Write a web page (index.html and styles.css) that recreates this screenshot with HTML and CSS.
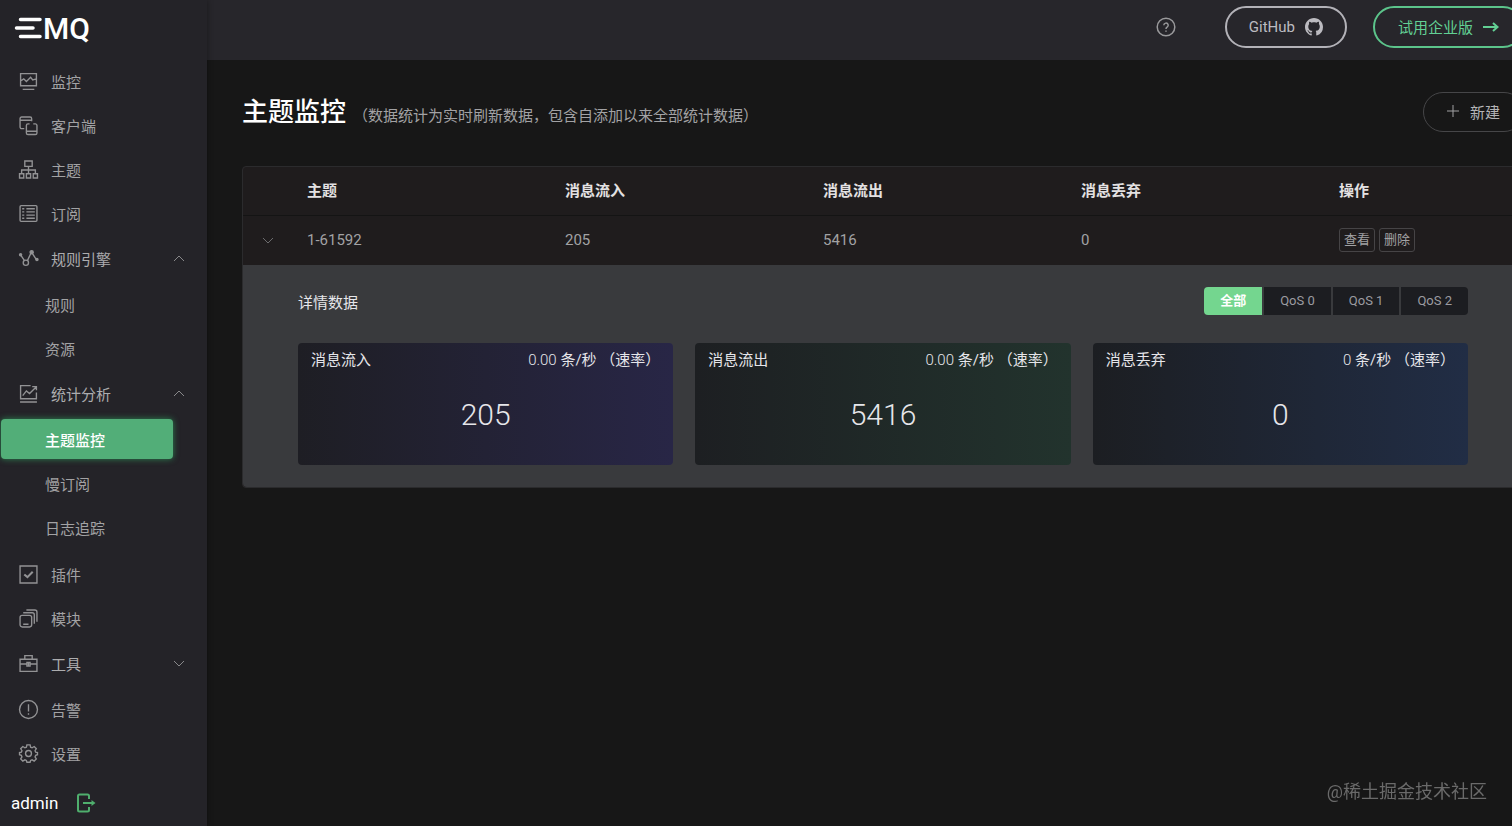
FILE: index.html
```html
<!DOCTYPE html>
<html lang="zh-CN">
<head>
    <meta charset="UTF-8">
    <meta name="viewport" content="width=device-width, initial-scale=1.0">
    <title>EMQ Dashboard</title>
    <link rel="stylesheet" href="styles.css">
</head>
<body>
    <div class="app">
        <aside class="sidebar">
            <a href="#" class="logo" aria-label="EMQ">
                <svg width="90" height="36" viewBox="0 0 90 36">
                    <path d="M6.500 9.500H26M2.500 18H19M6.500 26.500H26" fill="none" stroke="#fff" stroke-width="3.500" stroke-linecap="round"/>
                    <text x="29" y="29" class="logo-text">MQ</text>
                </svg>
            </a>

            <nav class="menu">
                <a href="#" class="menu-item">
                    <svg class="icon" viewBox="0 0 18 18"><path d="M1.500 1.500h15v11.500h-15zM3.500 16.500h11M1.500 8.500l3-2 2.500 2.500 4-4 2 2.500 3.500-1"/></svg>
                    监控
                </a>
                <a href="#" class="menu-item">
                    <svg class="icon" viewBox="0 0 18 18"><path d="M5 12H2.500A1.500 1.500 0 0 1 1 10.500V2.500A1.500 1.500 0 0 1 2.500 1h8A1.500 1.500 0 0 1 12 2.500V5M1 4h11M10 7.500H8.500A1.500 1.500 0 0 0 7 9v7a1.500 1.500 0 0 0 1.500 1.500h7A1.500 1.500 0 0 0 17 16V9a1.500 1.500 0 0 0-1.500-1.500H13.500M7 14.500h10"/></svg>
                    客户端
                </a>
                <a href="#" class="menu-item">
                    <svg class="icon" viewBox="0 0 18 18"><path d="M5.500 1h7v5h-7zM9 6v7M2.500 13V9.500h13V13M.5 13h4v4h-4zM7 13h4v4H7zM13.500 13h4v4h-4z"/></svg>
                    主题
                </a>
                <a href="#" class="menu-item">
                    <svg class="icon" viewBox="0 0 18 18"><rect x="1" y="1.500" width="16" height="15" rx="1"/><path d="M3 4.500h2M7 4.500h8M3 7.500h2M7 7.500h8M3 10.500h2M7 10.500h8M3 13.500h2M7 13.500h8"/></svg>
                    订阅
                </a>

                <button type="button" class="menu-item menu-title">
                    <svg class="icon" viewBox="0 0 18 18"><path d="M1.500 5.500l3.700 5.500M8 11l3.500-7.500M12.500 4l4 6"/><circle cx="6.500" cy="13" r="2.500"/><circle class="dot" cx="1.500" cy="5.500" r="1"/><circle class="dot" cx="12" cy="3" r="1.500"/><circle class="dot" cx="17" cy="10" r="1"/></svg>
                    规则引擎
                    <svg class="arrow" viewBox="0 0 12 12"><path d="M1 8l5-5 5 5"/></svg>
                </button>
                <div class="submenu">
                    <a href="#" class="menu-item">规则</a>
                    <a href="#" class="menu-item">资源</a>
                </div>

                <button type="button" class="menu-item menu-title">
                    <svg class="icon" viewBox="0 0 18 18"><path d="M11 1.500H1.500v12.500h15V8M1 17h16M3.500 11l3.500-4.500 3 2.500 6-6M12.500 2.500H16.500V6"/></svg>
                    统计分析
                    <svg class="arrow" viewBox="0 0 12 12"><path d="M1 8l5-5 5 5"/></svg>
                </button>
                <div class="submenu submenu-last">
                    <a href="#" class="menu-item active">主题监控</a>
                    <a href="#" class="menu-item">慢订阅</a>
                    <a href="#" class="menu-item">日志追踪</a>
                </div>

                <a href="#" class="menu-item">
                    <svg class="icon" viewBox="0 0 18 18"><path d="M1 1h16v16H1z"/><path class="thick" d="M5 9l3 2.500 5-5"/></svg>
                    插件
                </a>
                <a href="#" class="menu-item">
                    <svg class="icon" viewBox="0 0 18 18"><rect x="1" y="6" width="11" height="11" rx="2"/><path d="M4 14.500h5M4 3.500h8.500a2 2 0 0 1 2 2V14M7 1h8a2 2 0 0 1 2 2v9"/></svg>
                    模块
                </a>
                <button type="button" class="menu-item menu-title">
                    <svg class="icon" viewBox="0 0 18 18"><path d="M1 5h16v11.500H1zM5.500 5V1.500h7V5M1 9.500h6M11 9.500h6M7.500 8h3v3.500h-3zM9 8v3.500"/></svg>
                    工具
                    <svg class="arrow" viewBox="0 0 12 12"><path d="M1 3l5 5 5-5"/></svg>
                </button>
                <a href="#" class="menu-item">
                    <svg class="icon" viewBox="0 0 18 18"><circle cx="9" cy="9" r="8.500"/><path d="M9 4v7M9 12.500v1.500"/></svg>
                    告警
                </a>
                <a href="#" class="menu-item">
                    <svg class="icon" viewBox="0 0 18 18"><circle cx="9" cy="9" r="2.800"/><path d="M7.500.8h3l.5 2.200 1.400.6 2-1.200 2 2-1.200 2 .6 1.400 1.700.4v2l-1.700.6-.6 1.400 1.200 2-2 2-2-1.200-1.400.6-.5 1.700h-3L7 15.600 5.600 15l-2 1.200-2-2 1.200-2-.6-1.400L.5 10.200v-2l1.700-.4.6-1.400-1.200-2 2-2 2 1.200L7 3z"/></svg>
                    设置
                </a>
            </nav>

            <div class="user">
                <span>admin</span>
                <button type="button" class="logout" aria-label="退出">
                    <svg width="20" height="20" viewBox="0 0 20 20"><path d="M13 6V3a1.500 1.500 0 0 0-1.500-1.500h-8A1.500 1.500 0 0 0 2 3v14a1.500 1.500 0 0 0 1.500 1.500h8A1.500 1.500 0 0 0 13 17v-3M7 10h10"/><path class="tip" d="M15.500 7l4 3-4 3z"/></svg>
                </button>
            </div>
        </aside>

        <div class="main">
            <header class="topbar">
                <a href="#" class="help" aria-label="帮助">
                    <svg width="20" height="20" viewBox="0 0 20 20"><circle cx="10" cy="10" r="8.800"/><path d="M7.800 8.300a2.200 2.200 0 1 1 3.300 1.900c-.8.500-1.100.9-1.100 1.800M10 13.500v1.300"/></svg>
                </a>
                <a href="#" class="pill">
                    GitHub
                    <svg width="18" height="18" viewBox="0 0 16 16"><path fill="currentColor" d="M8 0C3.580 0 0 3.580 0 8c0 3.540 2.290 6.530 5.470 7.590.4.070.55-.17.55-.38 0-.19-.01-.82-.01-1.490-2.010.37-2.530-.49-2.690-.94-.09-.23-.48-.94-.82-1.130-.28-.15-.68-.52-.01-.53.63-.01 1.080.58 1.230.82.72 1.210 1.870.87 2.330.66.07-.52.28-.87.51-1.070-1.780-.2-3.640-.89-3.640-3.950 0-.87.31-1.590.82-2.150-.08-.2-.36-1.020.08-2.120 0 0 .67-.21 2.200.82.64-.18 1.320-.27 2-.27s1.360.09 2 .27c1.530-1.040 2.200-.82 2.200-.82.44 1.100.16 1.920.08 2.120.51.56.82 1.270.82 2.150 0 3.070-1.870 3.750-3.650 3.950.29.25.54.73.54 1.480 0 1.070-.01 1.930-.01 2.200 0 .21.15.46.55.38A8.010 8.010 0 0 0 16 8c0-4.420-3.580-8-8-8z"/></svg>
                </a>
                <a href="#" class="pill pill-green">
                    试用企业版
                    <svg width="16" height="16" viewBox="0 0 16 16"><path d="M0 8h14M10 4l4.500 4-4.500 4" fill="none" stroke="currentColor" stroke-width="2"/></svg>
                </a>
            </header>

            <main class="content">
                <div class="page-head">
                    <h1>主题监控</h1>
                    <span class="page-desc">（数据统计为实时刷新数据，包含自添加以来全部统计数据）</span>
                    <button type="button" class="btn-new">
                        <svg width="14" height="14" viewBox="0 0 14 14"><path d="M7 1v12M1 7h12"/></svg>
                        新建
                    </button>
                </div>

                <table class="topic-table">
                    <colgroup>
                        <col class="col-expand">
                        <col class="col-data">
                        <col class="col-data">
                        <col class="col-data">
                        <col class="col-data">
                        <col>
                    </colgroup>
                    <thead>
                        <tr>
                            <th></th>
                            <th>主题</th>
                            <th>消息流入</th>
                            <th>消息流出</th>
                            <th>消息丢弃</th>
                            <th>操作</th>
                        </tr>
                    </thead>
                    <tbody>
                        <tr>
                            <td class="cell-expand">
                                <button type="button" class="btn-expand" aria-label="展开">
                                    <svg class="arrow" viewBox="0 0 12 12"><path d="M1 3l5 5 5-5"/></svg>
                                </button>
                            </td>
                            <td>1-61592</td>
                            <td>205</td>
                            <td>5416</td>
                            <td>0</td>
                            <td>
                                <div class="actions">
                                    <button type="button" class="btn-mini">查看</button>
                                    <button type="button" class="btn-mini">删除</button>
                                </div>
                            </td>
                        </tr>
                        <tr>
                            <td colspan="6" class="detail">
                                <div class="detail-head">
                                    <span>详情数据</span>
                                    <div class="qos">
                                        <label><input type="radio" name="qos" checked><span>全部</span></label>
                                        <label><input type="radio" name="qos"><span>QoS 0</span></label>
                                        <label><input type="radio" name="qos"><span>QoS 1</span></label>
                                        <label><input type="radio" name="qos"><span>QoS 2</span></label>
                                    </div>
                                </div>
                                <div class="cards">
                                    <div class="card card-in">
                                        <div class="card-head"><span>消息流入</span><span><span class="rate">0.00</span> 条/秒 （速率）</span></div>
                                        <div class="card-num">205</div>
                                    </div>
                                    <div class="card card-out">
                                        <div class="card-head"><span>消息流出</span><span><span class="rate">0.00</span> 条/秒 （速率）</span></div>
                                        <div class="card-num">5416</div>
                                    </div>
                                    <div class="card card-drop">
                                        <div class="card-head"><span>消息丢弃</span><span><span class="rate">0</span> 条/秒 （速率）</span></div>
                                        <div class="card-num">0</div>
                                    </div>
                                </div>
                            </td>
                        </tr>
                    </tbody>
                </table>
            </main>
        </div>
    </div>

    <div class="watermark">@稀土掘金技术社区</div>
</body>
</html>
```
FILE: styles.css
```css
* {
    margin: 0;
    padding: 0;
    box-sizing: border-box;
}

body {
    font-family: Roboto, "Noto Sans CJK SC", sans-serif;
    font-size: 15px;
    color: #a2a2a4;
    background-color: #171717;
    height: 100vh;
    overflow: hidden;
}

a {
    color: inherit;
    text-decoration: none;
}

button {
    font: inherit;
    color: inherit;
    background: none;
    border: none;
    cursor: pointer;
}

svg {
    flex-shrink: 0;
}

/* the layout is a little wider than the window */
.app {
    display: flex;
    width: calc(100% + 48px);
    min-height: 100vh;
}

/* Sidebar */
.sidebar {
    width: 207px;
    flex-shrink: 0;
    display: flex;
    flex-direction: column;
    background-color: #242328;
    box-shadow: 0 0 6px rgba(0, 0, 0, 0.4);
    z-index: 1;
}

.logo {
    display: flex;
    align-items: center;
    height: 59px;
    padding: 0 14px 4px;
}

.logo-text {
    font-size: 30px;
    font-weight: 500;
    fill: #fff;
}

.menu-item {
    display: flex;
    align-items: center;
    gap: 13px;
    width: 100%;
    height: 44px;
    padding: 0 22px 0 19px;
}

.menu-title {
    height: 47px;
    color: #acacae;
}

.icon {
    width: 19px;
    height: 19px;
    fill: none;
    stroke: #929294;
    stroke-width: 1.3;
    overflow: visible;
}

.icon .dot {
    fill: #929294;
}

.icon .thick {
    stroke-width: 2;
}

.arrow {
    width: 12px;
    height: 12px;
    margin-left: auto;
    fill: none;
    stroke: #88888a;
}

.submenu .menu-item {
    padding-left: 45px;
}

.submenu-last {
    margin-bottom: 3px;
}

.submenu .active {
    width: auto;
    height: 40px;
    margin: 2px 34px 2px 1px;
    padding-left: 44px;
    color: #fff;
    font-weight: 500;
    background-color: #52ae78;
    border-radius: 4px;
    box-shadow: 0 0 6px rgba(52, 195, 110, 0.6);
}

.user {
    display: flex;
    align-items: center;
    gap: 18px;
    flex: 1;
    padding: 5px 11px 0;
    font-size: 17px;
    color: #fff;
}

.logout {
    display: flex;
}

.logout svg {
    fill: none;
    stroke: #4fae6d;
    stroke-width: 2;
    overflow: visible;
}

.logout .tip {
    fill: #4fae6d;
    stroke: none;
}

/* Topbar */
.main {
    flex: 1;
    min-width: 0;
}

.topbar {
    display: flex;
    align-items: center;
    justify-content: flex-end;
    gap: 26px;
    height: 60px;
    padding: 0 36px 7px;
    background-color: #27262b;
}

.help {
    display: flex;
    margin-right: 23px;
}

.help svg {
    fill: none;
    stroke: #99999b;
    stroke-width: 1.5;
}

.pill {
    display: flex;
    align-items: center;
    gap: 10px;
    height: 42px;
    padding: 0 22px;
    color: #bcbbc0;
    border: 2px solid #b3b2b8;
    border-radius: 21px;
}

.pill-green {
    padding: 0 23px;
    color: #62d094;
    border-color: #5cc48b;
}

/* Content */
.content {
    padding: 32px 36px 32px 35px;
}

.page-head {
    display: flex;
    align-items: center;
    height: 40px;
    margin-bottom: 34px;
}

h1 {
    font-size: 26px;
    font-weight: 500;
    line-height: 40px;
    color: #fff;
}

.page-desc {
    padding: 4px 0 0 7px;
}

.btn-new {
    display: flex;
    align-items: center;
    gap: 10px;
    height: 40px;
    margin-left: auto;
    padding: 0 23px 2px 22px;
    color: #b4b4b6;
    border: 1px solid #464648;
    border-radius: 20px;
}

.btn-new svg {
    fill: none;
    stroke: #a2a2a4;
}

/* Table */
.topic-table {
    width: 100%;
    table-layout: fixed;
    border-collapse: separate;
    border-spacing: 0;
    background-color: #1f1c1d;
    border: 1px solid #2b2b2d;
    border-radius: 4px;
}

.col-expand {
    width: 50px;
}

.col-data {
    width: 258px;
}

.topic-table th,
.topic-table td {
    height: 49px;
    padding: 0 14px 2px;
    text-align: left;
}

.topic-table th {
    padding-bottom: 4px;
    color: #e3e1e2;
    font-weight: 700;
    border-bottom: 1px solid #141414;
}

.topic-table .cell-expand {
    padding: 0;
}

.btn-expand {
    display: flex;
    width: 50px;
    justify-content: center;
}

.btn-expand .arrow {
    margin: 0;
    stroke: #6c6c6e;
}

.actions {
    display: flex;
    gap: 4px;
}

.btn-mini {
    height: 24px;
    padding: 0 4px;
    font-size: 13px;
    line-height: 20px;
    border: 1px solid #464446;
    border-radius: 3px;
}

/* Expanded row */
.topic-table .detail {
    padding: 22px 55px;
    color: #e6e6ea;
    background-color: #393a3d;
    border-radius: 0 0 4px 4px;
}

.detail-head {
    display: flex;
    align-items: center;
    justify-content: space-between;
    margin-bottom: 28px;
}

.qos {
    display: flex;
    gap: 2px;
    border-radius: 4px;
    overflow: hidden;
}

.qos label {
    position: relative;
    cursor: pointer;
}

.qos input {
    position: absolute;
    opacity: 0;
}

.qos span {
    display: block;
    height: 28px;
    padding: 0 16px;
    font-size: 13px;
    line-height: 28px;
    color: #9b9ba0;
    background-color: #1c1d21;
}

.qos input:checked + span {
    color: #fff;
    font-weight: 700;
    background-color: #74d68f;
}

.cards {
    display: grid;
    grid-template-columns: repeat(3, 1fr);
    gap: 22px;
}

.card {
    height: 122px;
    border-radius: 4px;
}

.card-in {
    background: linear-gradient(90deg, #1e1e24, #282646);
}

.card-out {
    background: linear-gradient(90deg, #1d1f22, #22332d);
}

.card-drop {
    background: linear-gradient(90deg, #1c1e22, #212d45);
}

.card-head {
    display: flex;
    justify-content: space-between;
    padding: 0 13px;
    line-height: 34px;
}

.rate {
    font-weight: 300;
}

.card-num {
    padding-top: 18px;
    font-size: 30px;
    font-weight: 300;
    line-height: 40px;
    text-align: center;
}

.watermark {
    position: fixed;
    right: 25px;
    bottom: 23px;
    font-size: 18px;
    color: #6a6a6a;
}
```
